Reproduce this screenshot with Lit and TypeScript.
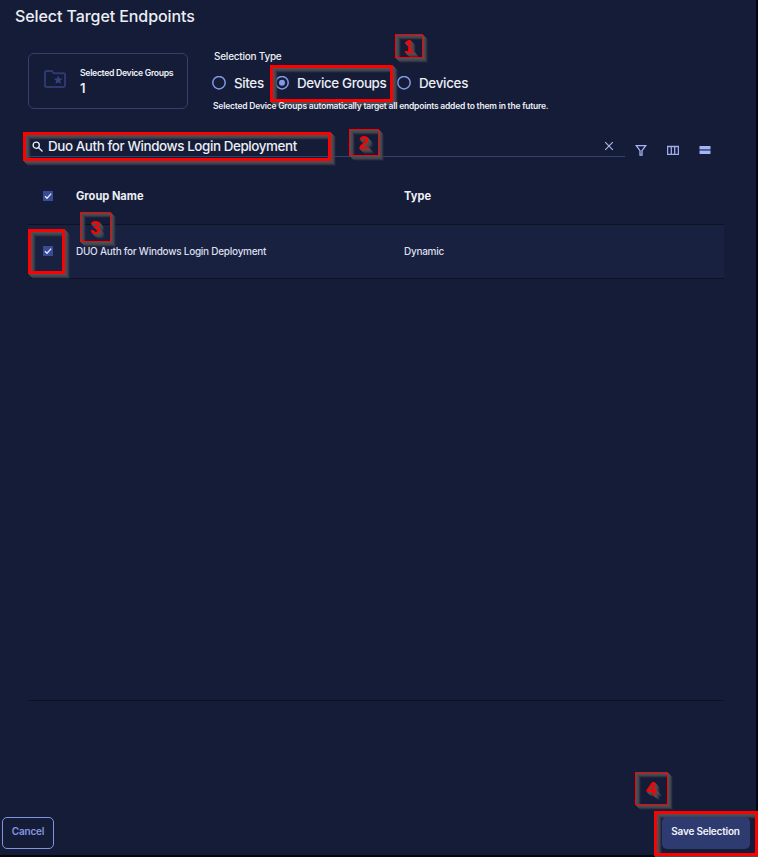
import { LitElement, html, css, svg } from "lit";
import { customElement, property } from "lit/decorators.js";

const steppedShadow = css`
  :host { filter: drop-shadow(1px 1px 0 #505156d0) drop-shadow(1px 1px 0 #4c4d53e8) drop-shadow(1px 1px 0 #484950d8) drop-shadow(1px 1px 0 #42434cb8) drop-shadow(1px 1px 0 #3c3e4a80); }
`;

@customElement("callout-box")
class CalloutBox extends LitElement {
  static styles = [steppedShadow, css`
    :host { display: block; box-sizing: border-box; border: 3px solid #fe0000; pointer-events: none; }
  `];
  render() { return html``; }
}

@customElement("step-badge")
class StepBadge extends LitElement {
  @property() label = "";
  static styles = [steppedShadow, css`
    :host { display: flex; align-items: center; justify-content: center; box-sizing: border-box;
      border: 1px solid #fe0000; color: #fe0000; font: 700 19px/1 "Liberation Sans", sans-serif; pointer-events: none; }
  `];
  render() { return html`<span>${this.label}</span>`; }
}

const check = svg`<path d="M2 5.2 4 7.2 8.2 2.6" fill="none" stroke="#e6e9f8" stroke-width="1.3"/>`;

@customElement("app-root")
class AppRoot extends LitElement {
  static styles = css`
    :host { display: block; position: relative; width: 758px; height: 857px; overflow: hidden; background: #05070f;
      font-family: Inter, sans-serif; color: #eceef5; }
    * { box-sizing: border-box; }
    svg { display: block; flex: none; }
    .dialog { width: 756px; height: 855px; background: #151c37; display: flex; flex-direction: column; }
    h1 { margin: 0; height: 34px; padding-left: 15px; font-size: 16px; font-weight: 500; line-height: 33px; letter-spacing: -0.08px; }
    .panel { margin-left: 14px; width: 724px; height: 680px; border: 1px solid #171b33; border-top: 0; border-radius: 0 0 6px 6px; padding: 0 13px; display: flex; flex-direction: column; }
    .top { display: flex; height: 93px; padding-top: 15px; }
    .card { margin-top: 4px; width: 160px; height: 56px; border: 1px solid #34406d; border-radius: 6px; display: flex; padding: 14px 0 0 15px; gap: 14px; }
    .card-text { display: flex; flex-direction: column; }
    .label { font-size: 8.7px; line-height: 10px; font-weight: 600; letter-spacing: -0.33px; white-space: nowrap; }
    .count { font-size: 13px; line-height: 16px; margin-top: 2px; font-weight: 600; }
    .types { margin-left: 26px; display: flex; flex-direction: column; white-space: nowrap; }
    .types .heading { font-size: 10px; line-height: 14px; font-weight: 500; letter-spacing: -0.24px; }
    .radios { display: flex; height: 20px; margin: 10px 0 0 -2px; align-items: center; }
    .radio { display: flex; align-items: center; gap: 7px; font-size: 13.4px; font-weight: 500; letter-spacing: -0.36px; }
    .r1 { width: 63px; } .r2 { width: 122px; } .r3 { letter-spacing: -0.3px; }
    .hint { position: relative; z-index: 2; margin: 7px 0 0 -1px; font-size: 8.5px; line-height: 12px; font-weight: 600; letter-spacing: -0.207px; }
    .bar { display: flex; height: 30px; }
    .search { display: flex; align-items: center; width: 597px; border-bottom: 1px solid #34406d; padding: 9px 11px 0 3px; gap: 4px; }
    .query { flex: 1; font-size: 13.4px; font-weight: 500; letter-spacing: -0.4px; white-space: nowrap; }
    .tools { display: flex; gap: 20px; padding: 17px 0 0 10px; }
    .table { height: 544px; width: 696px; border-bottom: 1px solid #0d1122; }
    .row { display: grid; grid-template-columns: 48px 328px 1fr; align-items: center; }
    .head { height: 68px; padding-top: 11px; font-size: 11.1px; font-weight: 700; border-bottom: 1px solid #0d1122; }
    .data { height: 54px; padding-bottom: 1px; background: #192141; border-bottom: 1px solid #0d1122; font-size: 10px; font-weight: 500; letter-spacing: -0.26px; color: #dcdfeb; }
    .box { width: 10px; height: 10px; margin-left: 15px; background: #394b94; }
    .footer { margin-top: auto; display: flex; justify-content: space-between; padding: 0 6px 6px 2px; }
    button { font: 600 10px Inter, sans-serif; height: 32px; border-radius: 5px; padding: 0 0 4px; letter-spacing: -0.2px; }
    .cancel { width: 52px; background: none; color: #8496e0; border: 1px solid #8094e2; }
    .save { position: relative; z-index: 2; width: 88px; padding-right: 1px; color: #f2f3fa; background: #2e3b70; border: 0; }
    .ann { position: absolute; z-index: 1; }
    .b1 { left: 270px; top: 65px; width: 123px; height: 37px; } .n1 { left: 395px; top: 34px; width: 28px; height: 24px; }
    .b2 { left: 23px; top: 132px; width: 308px; height: 29px; } .n2 { left: 349px; top: 129px; width: 30px; height: 27px; }
    .b3 { left: 28px; top: 229px; width: 37px; height: 45px; } .n3 { left: 80px; top: 212px; width: 31px; height: 30px; }
    .b4 { left: 654px; top: 811px; width: 104px; height: 45px; } .n4 { left: 635px; top: 772px; width: 33px; height: 33px; }
  `;
  radio(label: string, cls: string, on = false) {
    return html`<div class="radio ${cls}"><svg width="15" height="15" viewBox="0 0 15 15">
      <circle cx="7" cy="6.7" r="6.2" fill="none" stroke="#8398e6" stroke-width="1.5"/>
      ${on ? svg`<circle cx="7" cy="6.7" r="3" fill="#8398e6"/>` : ""}</svg><span>${label}</span></div>`;
  }
  box() { return html`<svg class="box" viewBox="0 0 10 10">${check}</svg>`; }
  render() {
    return html`
      <div class="dialog">
        <h1>Select Target Endpoints</h1>
        <div class="panel">
          <div class="top">
            <div class="card">
              <svg width="22" height="20" viewBox="0 0 22 20"><path d="M1 4.500A1.500 1.500 0 0 1 2.500 3h5.300l2 2.300h9.700A1.500 1.500 0 0 1 21 6.800v10.700a1.500 1.500 0 0 1-1.500 1.500h-17A1.500 1.500 0 0 1 1 17.500Z" fill="none" stroke="#2d3b72" stroke-width="1.900"/><path d="m14.200 7.500 1.200 3 3.200.2-2.500 2 .9 3.200-2.800-1.700-2.800 1.700.9-3.200-2.500-2 3.200-.2Z" fill="#34437f"/></svg>
              <div class="card-text"><span class="label">Selected Device Groups</span><span class="count">1</span></div>
            </div>
            <div class="types">
              <span class="heading">Selection Type</span>
              <div class="radios">${this.radio("Sites", "r1")}${this.radio("Device Groups", "r2", true)}${this.radio("Devices", "r3")}</div>
              <span class="hint">Selected Device Groups automatically target all endpoints added to them in the future.</span>
            </div>
          </div>
          <div class="bar">
            <div class="search">
              <svg width="13" height="13" viewBox="0 0 13 13" fill="none" stroke="#eceef5" stroke-width="1.3"><circle cx="5.2" cy="5.2" r="3.1"/><path d="m7.5 7.5 4 4"/></svg>
              <span class="query">Duo Auth for Windows Login Deployment</span>
              <svg width="10" height="10" viewBox="0 0 10 10"><path d="m1.2 1.2 7.6 7.6m0-7.6L1.2 8.8" stroke="#a9b5e8" stroke-width="1.2"/></svg>
            </div>
            <div class="tools">
              <svg width="12" height="13" viewBox="0 0 12 13"><path d="M1.3 1.7h9.4L7 6.6v4.6H5V6.6Z" fill="none" stroke="#a5b4f5" stroke-width="1.3"/></svg>
              <svg width="12" height="13" viewBox="0 0 12 13"><path d="M.6 2.500h10.800v7.800H.6ZM4.300 2.500v7.800M7.700 2.500v7.800" fill="none" stroke="#9dacf0" stroke-width="1.300"/></svg>
              <svg width="12" height="13" viewBox="0 0 12 13"><path d="M.5 2h11v3.300H.5ZM.5 7h11v3H.5Z" fill="#a5b4f5"/><path d="M.5 5.300h11V7H.5Z" fill="#56659f"/></svg>
            </div>
          </div>
          <div class="table">
            <div class="row head">${this.box()}<span>Group Name</span><span>Type</span></div>
            <div class="row data">${this.box()}<span>DUO Auth for Windows Login Deployment</span><span>Dynamic</span></div>
          </div>
        </div>
        <div class="footer"><button class="cancel">Cancel</button><button class="save">Save Selection</button></div>
      </div>
      ${[1, 2, 3, 4].map((n) => html`<callout-box class="ann b${n}"></callout-box><step-badge class="ann n${n}" label=${n}></step-badge>`)}
    `;
  }
}
